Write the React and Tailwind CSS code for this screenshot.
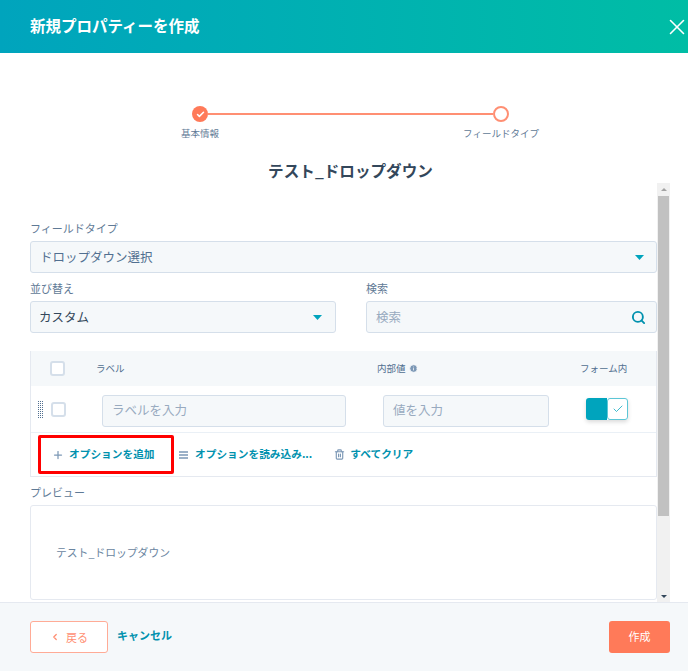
import { Check, ChevronLeft, Info, Plus, Search, Trash2, X } from "lucide-react";

const font = { fontFamily: '"Noto Sans CJK JP", "Noto Sans", sans-serif' };

const Caret = ({ className = "" }) => (
  <svg width="9" height="5" viewBox="0 0 10 6" preserveAspectRatio="none" className={className}>
    <path d="M0 0h10L5 6z" fill="#00a4bd" />
  </svg>
);

const Box = () => <div className="w-[15px] h-[15px] rounded-[3px] border-2 border-[#d5dfea] bg-white" />;

const Label = ({ children }) => (
  <div className="h-[26px] text-[11px] leading-[26px] text-[#5f7a96]">{children}</div>
);

const Input = ({ className = "", children }) => (
  <div className={`h-[32px] rounded-[3px] border border-[#d5dfea] bg-[#f5f8fa] flex items-center justify-between text-[12.5px] ${className}`}>
    {children}
  </div>
);

const Dots = () => (
  <div className="grid grid-cols-3 gap-[1px] w-[5px]">
    {Array.from({ length: 27 }).map((_, i) => (
      <div key={i} className="w-[1px] h-[1px] bg-[#516f90]" />
    ))}
  </div>
);

export default function App() {
  return (
    <div style={font} className="w-[688px] h-[671px] flex flex-col bg-white overflow-hidden">
      <header className="h-[53px] shrink-0 flex items-center justify-between pl-[30px] bg-gradient-to-r from-[#00a4bd] to-[#00bda5]">
        <h1 className="text-[15.5px] font-bold text-white -mt-[2px]">新規プロパティーを作成</h1>
        <X size={26} strokeWidth={1.5} className="text-white -mr-[2px]" />
      </header>

      <div className="h-[130px] shrink-0 flex flex-col items-center pl-[13px]">
        <div className="mt-[53px] w-[317px] flex items-center">
          <div className="w-[16px] h-[16px] rounded-full bg-[#ff7a59] flex items-center justify-center">
            <Check size={9} strokeWidth={4} className="text-white" />
          </div>
          <div className="flex-1 h-[2px] bg-[#ff8f73]" />
          <div className="w-[16px] h-[16px] rounded-full border-2 border-[#ff8f73] bg-white" />
        </div>
        <div className="w-[317px] mt-[3px] flex justify-between text-[9.5px] leading-[16px] text-[#5f7a96]">
          <div className="w-[16px] flex justify-center whitespace-nowrap">基本情報</div>
          <div className="w-[16px] flex justify-center whitespace-nowrap">フィールドタイプ</div>
        </div>
        <h2 className="mt-[17px] text-[15.6px] leading-[24px] font-bold text-[#33475b]">テスト_ドロップダウン</h2>
      </div>

      <div className="h-[419px] shrink-0 flex pl-[30px]">
        <div className="w-[627px] shrink-0 overflow-hidden pt-[32px]">
          <Label>フィールドタイプ</Label>
          <Input className="pl-[9px] pr-[12px] text-[#516f90]">
            <span>ドロップダウン選択</span>
            <Caret />
          </Input>

          <div className="mt-[2px] flex justify-between">
            <div className="w-[306px]">
              <Label>並び替え</Label>
              <Input className="pl-[8px] pr-[13px] text-[#33475b]">
                <span>カスタム</span>
                <Caret />
              </Input>
            </div>
            <div className="w-[291px]">
              <Label>検索</Label>
              <Input className="pl-[9px] pr-[10px] text-[#98aabf]">
                <span>検索</span>
                <Search size={15} strokeWidth={3} className="text-[#0091ae]" />
              </Input>
            </div>
          </div>

          <div className="mt-[18px] border-x border-b border-[#e5e9f0]">
            <div className="h-[35px] pb-[1px] flex items-center bg-[#f5f8fa] text-[9.5px] text-[#516f90]">
              <div className="w-[65px] pl-[19px]"><Box /></div>
              <div className="w-[281px]">ラベル</div>
              <div className="w-[203px] flex items-center gap-[3px]">
                内部値
                <Info size={9} className="text-white fill-[#7c98b6]" />
              </div>
              <div>フォーム内</div>
            </div>

            <div className="h-[47px] flex items-center border-b border-[#eaf0f6]">
              <div className="w-[20px] pl-[7px]"><Dots /></div>
              <Box />
              <Input className="mt-[3px] ml-[36px] w-[244px] px-[9px] text-[#98aabf]">ラベルを入力</Input>
              <Input className="mt-[3px] ml-[37px] w-[166px] px-[9px] text-[#98aabf]">値を入力</Input>
              <div className="ml-[37px] w-[42px] h-[22px] flex rounded-[3px] shadow-[0_2px_4px_rgba(0,0,0,0.15)]">
                <div className="w-[21px] bg-[#00a4bd] rounded-l-[3px]" />
                <div className="w-[21px] rounded-[3px] border border-[#5cc6d6] bg-white flex items-center justify-center">
                  <Check size={12} strokeWidth={1.5} className="text-[#00a4bd]" />
                </div>
              </div>
            </div>

            <div className="h-[43px] flex items-center pl-[7px] text-[10.7px] font-bold text-[#0091ae]">
              <div className="w-[136px] h-[39px] border-[3px] border-[#ff0000] rounded-[2px] flex items-center pl-[11px]">
                <Plus size={12} strokeWidth={2.5} className="text-[#7c98b6] mr-[5px]" />
                オプションを追加
              </div>
              <svg width="9" height="8" viewBox="0 0 9 8" className="ml-[5px] mr-[7px]">
                <path d="M0 1h9M0 4h9M0 7h9" stroke="#7c98b6" strokeWidth="1.5" />
              </svg>
              <span>オプションを読み込み...</span>
              <Trash2 size={11} strokeWidth={2.5} className="ml-[22px] mr-[5px] text-[#7c98b6]" />
              <span>すべてクリア</span>
            </div>
          </div>

          <div className="mt-[2px]"><Label>プレビュー</Label></div>
          <div className="h-[95px] rounded-[3px] border border-[#e5e9f0] flex items-center pl-[25px] text-[10.8px] text-[#6a85a0]">
            テスト_ドロップダウン
          </div>
        </div>

        <div className="w-[13px] bg-[#f1f1f1] flex flex-col items-center">
          <div className="h-[13px] flex items-center">
            <div className="border-x-[3px] border-b-[3px] border-x-transparent border-b-[#a3a3a3]" />
          </div>
          <div className="w-[11px] h-[320px] bg-[#c1c1c1]" />
          <div className="flex-1" />
          <div className="h-[12px] flex items-center">
            <div className="border-x-[3px] border-t-[3px] border-x-transparent border-t-[#33475b]" />
          </div>
        </div>
      </div>

      <footer className="flex-1 border-t border-[#e5e9f0] bg-[#f5f8fa] flex items-center pl-[30px] pr-[18px]">
        <button className="w-[78px] h-[32px] rounded-[3px] border border-[#ffab96] bg-white flex items-center justify-center gap-[6px] text-[11px] text-[#ff8f73]">
          <ChevronLeft size={10} strokeWidth={3} />
          戻る
        </button>
        <span className="ml-[9px] mb-[3px] text-[11px] font-bold text-[#0091ae]">キャンセル</span>
        <button className="ml-auto w-[61px] h-[32px] pb-[2px] rounded-[3px] bg-[#ff7a59] text-[11px] text-white">作成</button>
      </footer>
    </div>
  );
}
